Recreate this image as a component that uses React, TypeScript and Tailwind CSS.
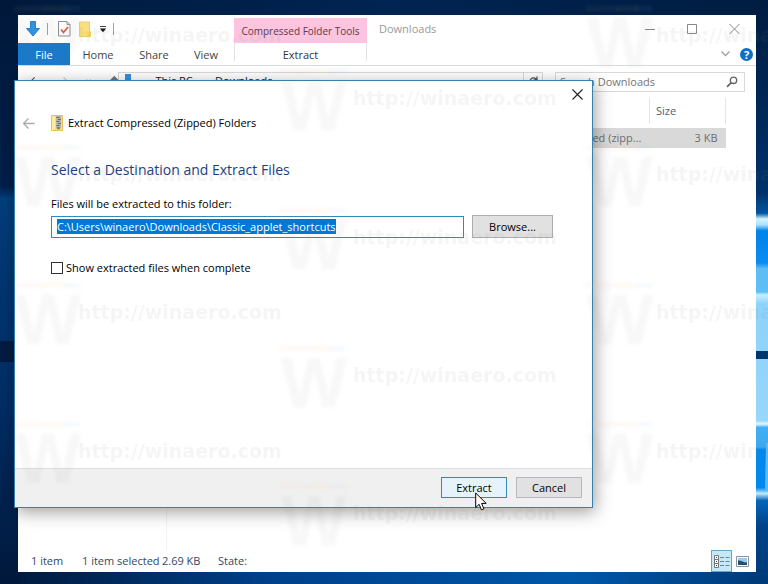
import React, { useEffect, useRef, useState } from 'react';

const TABS = [
  { label: 'Home', width: 'w-14' },
  { label: 'Share', width: 'w-14' },
  { label: 'View', width: 'w-12' },
];

const WATERMARKS = [
  { x: 16, y: 36, text: 78 }, { x: 16, y: 175, text: 78 }, { x: 16, y: 313, text: 78 }, { x: 16, y: 452, text: 78 },
  { x: 282, y: 99, text: 353 }, { x: 282, y: 238, text: 353 }, { x: 282, y: 376, text: 353 }, { x: 282, y: 514, text: 353 },
  { x: 588, y: 36, text: 656 }, { x: 588, y: 175, text: 656 }, { x: 588, y: 313, text: 656 }, { x: 588, y: 452, text: 656 },
];

const Wallpaper: React.FC = () => (
  <svg className="absolute inset-0 h-full w-full" viewBox="0 0 768 584" preserveAspectRatio="none" aria-hidden="true">
    <defs>
      <linearGradient id="sky" x1="0" y1="0" x2="1" y2="0">
        <stop offset="0" stopColor="#001a3d" />
        <stop offset="0.5" stopColor="#002453" />
        <stop offset="1" stopColor="#001d42" />
      </linearGradient>
      <linearGradient id="floor" x1="0" y1="0" x2="1" y2="0">
        <stop offset="0" stopColor="#00183a" />
        <stop offset="0.35" stopColor="#00408a" />
        <stop offset="0.75" stopColor="#0057a8" />
        <stop offset="1" stopColor="#003a78" />
      </linearGradient>
      <linearGradient id="left" x1="0" y1="0" x2="0" y2="1">
        <stop offset="0" stopColor="#00183a" />
        <stop offset="0.32" stopColor="#001f4b" />
        <stop offset="0.34" stopColor="#003f7c" />
        <stop offset="0.5" stopColor="#003571" />
        <stop offset="0.7" stopColor="#002d66" />
        <stop offset="1" stopColor="#00183a" />
      </linearGradient>
      <linearGradient id="right" x1="0" y1="0" x2="0" y2="1">
        <stop offset="0" stopColor="#001c40" />
        <stop offset="0.33" stopColor="#00316a" />
        <stop offset="0.365" stopColor="#00559f" />
        <stop offset="0.375" stopColor="#d5f4ff" />
        <stop offset="0.385" stopColor="#a9e2ff" />
        <stop offset="0.395" stopColor="#0083ea" />
        <stop offset="0.45" stopColor="#0a8cf0" />
        <stop offset="0.46" stopColor="#5fbdf4" />
        <stop offset="0.5" stopColor="#5dbff5" />
        <stop offset="0.505" stopColor="#c8efff" />
        <stop offset="0.52" stopColor="#8dd3fb" />
        <stop offset="0.72" stopColor="#98d6fa" />
        <stop offset="0.726" stopColor="#e2f8ff" />
        <stop offset="0.732" stopColor="#43aff2" />
        <stop offset="0.765" stopColor="#3ca9ef" />
        <stop offset="0.77" stopColor="#0088ee" />
        <stop offset="0.835" stopColor="#0088ee" />
        <stop offset="0.845" stopColor="#bfeaff" />
        <stop offset="0.857" stopColor="#0766b9" />
        <stop offset="0.9" stopColor="#004387" />
        <stop offset="1" stopColor="#003a78" />
      </linearGradient>
    </defs>
    <rect width="768" height="584" fill="url(#sky)" />
    <rect y="568" width="768" height="16" fill="url(#floor)" />
    <rect width="20" height="584" fill="url(#left)" />
    <rect y="341" width="20" height="21" fill="#001b43" />
    <rect x="754" width="14" height="584" fill="url(#right)" />
    <rect x="754" y="351" width="14" height="8" fill="#00356f" />
    <path d="M766 443 H768 V490 H765Z" fill="#5cb9f3" />
  </svg>
);

const Watermarks: React.FC = () => (
  <svg className="pointer-events-none absolute inset-0 h-full w-full" aria-hidden="true">
    <defs>
      <filter id="soft" x="-20%" y="-20%" width="140%" height="140%">
        <feGaussianBlur stdDeviation="1.5" />
      </filter>
    </defs>
    {WATERMARKS.map((w) => (
      <g key={`${w.x}-${w.y}`}>
        <g filter="url(#soft)">
          <rect x={w.x - 2} y={w.y - 30} width="32" height="5" fill="#ff9a70" opacity="0.06" />
          <rect x={w.x + 28} y={w.y - 30} width="22" height="5" fill="#ffcc55" opacity="0.07" />
          <rect x={w.x + 48} y={w.y - 30} width="16" height="5" fill="#7fbfff" opacity="0.07" />
          <text x={w.x - 1} y={w.y + 31} fontFamily="Liberation Sans, sans-serif" fontWeight="700" fontSize="70" fill="#707070" opacity="0.05">W</text>
        </g>
        <text x={w.text} y={w.y + 6} fontFamily="DejaVu Sans, sans-serif" fontWeight="700" fontSize="19" fill="#808080" opacity="0.07">http://winaero.com</text>
      </g>
    ))}
  </svg>
);

const ZipIcon: React.FC = () => (
  <svg width="12" height="16" viewBox="0 0 12 16" aria-hidden="true">
    <path d="M0.500 0.500h11v15h-11z" fill="#f8dc78" stroke="#e5c157" />
    <path d="M1 1h3v14h-3z" fill="#fdeba0" />
    <path d="M5 1h5v12l-2.500 2-2.500-2z" fill="#b4b4a8" />
    <path d="M5.500 2.500h3M7 4.500h3M5.500 6.500h3M7 8.500h3M5.500 10.500h3" stroke="#686c72" />
    <path d="M6.500 12h2v2h-2z" fill="#6b7180" />
  </svg>
);

const QuickAccess: React.FC = () => (
  <div className="flex h-7 items-center pl-2">
    <svg width="14" height="16" viewBox="0 0 14 16" aria-hidden="true">
      <path d="M4.500 0.500h5v7h4L7 15 0.500 7.500h4z" fill="#3191e3" stroke="#2a7fcb" />
    </svg>
    <span className="ml-[7px] h-3 w-px bg-gray-400" />
    <button aria-label="Properties" className="ml-2.5">
      <svg width="13" height="16" viewBox="0 0 13 16">
        <path d="M0.500 0.500h8.500l3 3v11.500h-11.500z" fill="#fafafa" stroke="#8e8e96" />
        <path d="M9 0.500v3h3" fill="none" stroke="#8e8e96" />
        <path d="M3 8.500l2.500 3 4.500-5.500" fill="none" stroke="#cf5f3e" strokeWidth="1.700" />
      </svg>
    </button>
    <button aria-label="New folder" className="ml-2">
      <svg width="12" height="16" viewBox="0 0 12 16">
        <path d="M0.500 1h10v9.500h1v5h-11z" fill="#fbdf7c" stroke="#efcc63" />
        <path d="M9.500 11h2v4h-2z" fill="#f2cd62" />
      </svg>
    </button>
    <button aria-label="Customize quick access" className="ml-2">
      <svg width="8" height="8" viewBox="0 0 8 8">
        <path d="M1 1.500h6" stroke="#444" />
        <path d="M0.800 3.500h6.400L4 7.200z" fill="#111" />
      </svg>
    </button>
    <span className="ml-[6px] h-3 w-px bg-gray-400" />
  </div>
);

const Ribbon: React.FC = () => (
  <header className="flex border-b border-[#dadbdc]">
    <div className="flex w-[216px] flex-col">
      <QuickAccess />
      <nav className="flex h-[22px] text-[#444]">
        <button className="w-[52px] bg-[#1979ca] pt-px text-white">File</button>
        {TABS.map((t) => (
          <button key={t.label} className={`${t.width} pt-px`}>{t.label}</button>
        ))}
      </nav>
    </div>
    <div className="flex w-[133px] flex-col pt-[3px]">
      <div className="flex h-[25px] items-center justify-center bg-[#fcc4de] text-[10px] whitespace-nowrap text-[#5c3a4c]">Compressed Folder Tools</div>
      <button className="mb-1 h-[18px] border-x border-[#e3e3e3] pt-1 leading-[15px] text-[#333]">Extract</button>
    </div>
    <div className="flex flex-1 flex-col">
      <div className="flex h-7 items-center pr-4 pl-3 text-[#999]">
        <span className="flex-1">Downloads</span>
        <button aria-label="Minimize">
          <svg width="10" height="10" viewBox="0 0 10 10"><path d="M0 5.500h10" stroke="#888" /></svg>
        </button>
        <button aria-label="Maximize" className="ml-8">
          <svg width="10" height="10" viewBox="0 0 10 10"><path d="M0.500 0.500h9v9h-9z" fill="none" stroke="#888" /></svg>
        </button>
        <button aria-label="Close" className="ml-8">
          <svg width="11" height="10" viewBox="0 0 11 10"><path d="M0.500 0l10 10M10.500 0l-10 10" stroke="#888" /></svg>
        </button>
      </div>
      <div className="flex h-[22px] items-center justify-end gap-2.5 pr-[3px]">
        <button aria-label="Collapse ribbon">
          <svg width="9" height="6" viewBox="0 0 9 6"><path d="M0.500 0.500l4 4 4-4" fill="none" stroke="#a0a0a8" strokeWidth="1.300" /></svg>
        </button>
        <button aria-label="Help" className="flex h-[13px] w-[13px] items-center justify-center rounded-full bg-[#0f6fc6] font-bold leading-none text-white">?</button>
      </div>
    </div>
  </header>
);

const AddressRow: React.FC = () => (
  <div className="flex items-center pt-1.5 pr-[11px] pl-3 text-[#222]">
    <div className="flex w-[88px] items-center gap-[18px]">
      <svg width="12" height="13" viewBox="0 0 12 13"><path d="M5.500 0.500l-5 5 5 5M0.500 5.500h11" fill="none" stroke="#555" strokeWidth="1.300" /></svg>
      <svg width="12" height="13" viewBox="0 0 12 13"><path d="M6.500 0.500l5 5-5 5M11.500 5.500h-11" fill="none" stroke="#c8c8c8" strokeWidth="1.300" /></svg>
      <svg width="6" height="8" viewBox="0 0 6 8"><path d="M0.500 0.500l2.500 2.500 2.500-2.500" fill="none" stroke="#c8c8c8" /></svg>
      <svg width="10" height="14" viewBox="0 0 10 14"><path d="M5 12v-10M1 5.500l4-4 4 4" fill="none" stroke="#777" strokeWidth="2.500" /></svg>
    </div>
    <div className="flex h-5 flex-1 items-center border border-[#d9d9d9] pb-[3px]">
      <svg className="ml-1.5" width="6" height="14" viewBox="0 0 6 14"><path d="M0 0h6v14h-6z" fill="#3191e3" /></svg>
      <span className="ml-3 text-[8px] text-[#777]">›</span>
      <span className="ml-2.5">This PC</span>
      <span className="ml-2.5 text-[8px] text-[#777]">›</span>
      <span className="ml-2.5 flex-1">Downloads</span>
      <button aria-label="Refresh" className="flex h-full w-[19px] items-center justify-center border-l border-[#d9d9d9]">
        <svg width="9" height="10" viewBox="0 0 9 10"><path d="M7.500 3.500a3.500 3.500 0 1 0 0.500 2.500M8 0.500v3.500h-3.500" fill="none" stroke="#555" strokeWidth="1.300" /></svg>
      </button>
    </div>
    <label className="ml-3 flex h-5 w-[190px] items-center border border-[#d9d9d9] pr-1.5">
      <input aria-label="Search Downloads" placeholder="Search Downloads" className="min-w-0 flex-1 pl-1 outline-none placeholder:text-[#757575]" />
      <svg width="12" height="12" viewBox="0 0 12 12" aria-hidden="true">
        <circle cx="7.500" cy="4.300" r="3.200" fill="none" stroke="#666" strokeWidth="1.400" />
        <path d="M5.200 6.600L1 10.800" stroke="#666" strokeWidth="1.800" />
      </svg>
    </label>
  </div>
);

const FileList: React.FC = () => (
  <main className="flex flex-1 pt-1.5 pr-[30px]">
    <div className="w-[149px] border-r border-[#f3f3f3]" />
    <div className="flex-1 pl-2">
      <table className="w-full table-fixed border-collapse">
        <thead>
          <tr className="h-[26px] text-left text-[#4c607a]">
            <th />
            <th className="w-[82px] border-r border-[#e5e5e5]" />
            <th className="w-[76px] border-r border-[#e5e5e5] pl-1.5 font-normal">Size</th>
          </tr>
        </thead>
        <tbody>
          <tr className="h-1" />
          <tr className="h-5 bg-[#d9d9d9] text-[#6d6d6d]">
            <td />
            <td className="pr-2 text-right whitespace-nowrap"><span className="float-right">Compressed (zipp...</span></td>
            <td className="pr-2 text-right">3 KB</td>
          </tr>
        </tbody>
      </table>
    </div>
  </main>
);

const StatusBar: React.FC = () => (
  <footer className="flex h-[22px] items-center pr-[7px] pl-[13px] text-[#33475e]">
    <span className="w-[51px]">1 item</span>
    <span className="w-20 whitespace-nowrap">1 item selected</span>
    <span className="w-14 whitespace-nowrap">2.69 KB</span>
    <span className="flex-1">State:</span>
    <button aria-label="Details view" className="flex h-[22px] w-[21px] items-center justify-center border border-[#5aa9c8] bg-[#c5e9f6]">
      <svg width="16" height="13" viewBox="0 0 16 13">
        <path d="M0.500 0.500h4v12h-4z" fill="#fff" stroke="#777" />
        <path d="M0.500 4.500h4M0.500 8.500h4" stroke="#777" />
        <path d="M2 2.500h1M2 6.500h1M2 10.500h1" stroke="#333" />
        <path d="M6 2.500h4M11.500 2.500h4M6 6.500h4M11.500 6.500h4M6 10.500h4M11.500 10.500h4" stroke="#6686a0" />
      </svg>
    </button>
    <button aria-label="Thumbnail view" className="ml-1">
      <svg width="13" height="11" viewBox="0 0 13 11">
        <path d="M0.500 0.500h12v10h-12z" fill="#fff" stroke="#8a949e" />
        <path d="M2 2h9v7h-9z" fill="#9ccbec" />
        <path d="M2 4.500c3-0.500 5 2 9 2v2.500h-9z" fill="#24506f" />
      </svg>
    </button>
  </footer>
);

const ExtractDialog: React.FC = () => {
  const pathRef = useRef<HTMLInputElement>(null);
  const [path, setPath] = useState('C:\\Users\\winaero\\Downloads\\Classic_applet_shortcuts');
  const [showFiles, setShowFiles] = useState(false);

  useEffect(() => {
    pathRef.current?.focus();
    pathRef.current?.select();
  }, []);

  return (
    <section role="dialog" aria-labelledby="wizard-title" className="absolute top-20 right-[175px] left-[14px] border border-[#3581ae] bg-white text-black shadow-[2px_4px_16px_rgba(0,0,0,0.38)]">
      <div className="flex justify-end pt-2 pr-[9px]">
        <button aria-label="Close dialog">
          <svg width="11" height="11" viewBox="0 0 11 11"><path d="M0.500 0.500l10 10M10.500 0.500l-10 10" stroke="#222" strokeWidth="1.100" /></svg>
        </button>
      </div>
      <div className="mt-[15px] flex items-center pl-2">
        <button aria-label="Back">
          <svg width="12" height="11" viewBox="0 0 12 11"><path d="M5.500 0.500l-5 5 5 5M0.500 5.500h11" fill="none" stroke="#ababab" strokeWidth="1.300" /></svg>
        </button>
        <span className="ml-4"><ZipIcon /></span>
        <h1 id="wizard-title" className="ml-[5px]">Extract Compressed (Zipped) Folders</h1>
      </div>

      <div className="h-[337px] pt-[29px] pl-9">
        <h2 className="text-sm leading-5 text-[#1a3f7e]">Select a Destination and Extract Files</h2>
        <label htmlFor="path" className="mt-4 block">Files will be extracted to this folder:</label>
        <div className="mt-[3px] flex items-center gap-2 pr-[39px]">
          <input
            id="path"
            ref={pathRef}
            value={path}
            onChange={(e) => setPath(e.target.value)}
            className="h-[22px] min-w-0 flex-1 border border-[#2f8bbb] px-[5px] outline-none selection:bg-[#0078d7] selection:text-white"
          />
          <button className="h-[23px] w-[81px] border border-[#adadad] bg-[#e1e1e1]">Browse...</button>
        </div>
        <label className="mt-[22px] flex items-center gap-[3px]">
          <input
            type="checkbox"
            checked={showFiles}
            onChange={(e) => setShowFiles(e.target.checked)}
            className="h-3 w-3 appearance-none border border-[#333] bg-white checked:bg-[#0078d7]"
          />
          Show extracted files when complete
        </label>
      </div>

      <div className="flex justify-end gap-[9px] border-t border-[#dfdfdf] bg-[#f0f0f0] pt-2 pr-2.5 pb-[9px]">
        <button className="h-[21px] w-[66px] border border-[#2f8bbb] bg-[#e5f3fb]">Extract</button>
        <button className="h-[21px] w-[66px] border border-[#b5b8bf] bg-[#e1e1e1]">Cancel</button>
      </div>
    </section>
  );
};

const App: React.FC = () => {
  return (
    <div className="relative h-screen overflow-hidden font-['Open_Sans','Noto_Sans',sans-serif] text-[11px] leading-4">
      <Wallpaper />

      <div className="absolute top-[15px] right-3 bottom-3 left-[18px] flex flex-col bg-white">
        <Ribbon />
        <AddressRow />
        <FileList />
        <StatusBar />
      </div>

      <ExtractDialog />

      <Watermarks />

      {/* Mouse pointer over the Extract button */}
      <svg className="pointer-events-none absolute top-[492px] left-[475px]" width="12" height="19" viewBox="0 0 12 19" aria-hidden="true">
        <path d="M0.700 1v14.500l3.400-3.200 2.300 5.500 2.500-1-2.300-5.400h4.600z" fill="#fff" stroke="#000" />
      </svg>
    </div>
  );
};

export default App;
